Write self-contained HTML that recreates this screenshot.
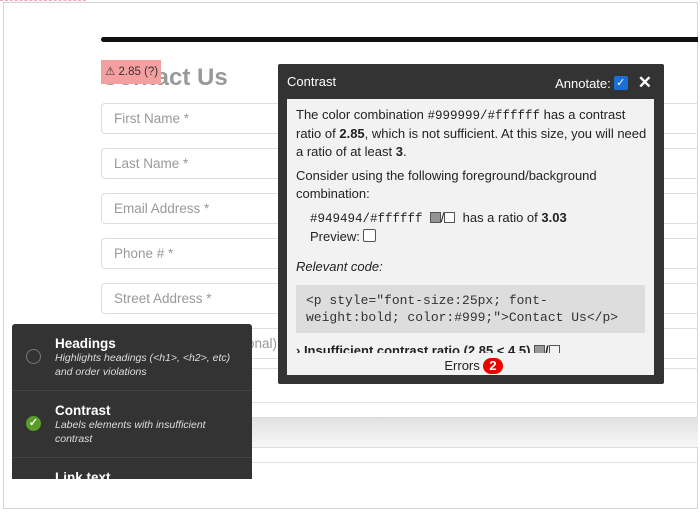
<!DOCTYPE html>
<html><head><meta charset="utf-8"><style>
*{box-sizing:border-box;margin:0;padding:0}
body{width:700px;height:517px;background:#fff;position:relative;overflow:hidden;font-family:"Liberation Sans",Arial,sans-serif}
.abs{position:absolute}
.frame{left:3px;top:2px;width:695px;height:507px;border:1px solid #d4d4d4}
.pink{left:0;top:0;width:86px;border-top:1px dashed #f4a6b8}
.bar{left:101px;top:37px;width:597px;height:5px;background:#111;border-radius:3px 0 0 3px}
.h{left:101px;top:64px;font-size:24px;font-weight:bold;color:#999}
.badge{left:101px;top:60px;width:60px;height:24px;background:#f5a0a0;color:#333;font-size:11.5px;line-height:24px;padding-left:4px}
.inp{left:101px;width:597px;height:31px;border:1px solid #ddd;border-right:none;border-radius:4px 0 0 4px;color:#999;font-size:13.5px;line-height:29px;padding-left:12px}
.ln{left:101px;width:597px;border-top:1px solid #e0e0e0}
.grad{left:101px;top:417px;width:597px;height:31px;background:linear-gradient(#e2e2e2,#f7f7f7);border-top:1px solid #ddd;border-bottom:1px solid #ddd}
.panel{left:278px;top:64px;width:386px;height:320px;background:#333;border-radius:2px}
.ph{left:9px;top:10px;color:#fff;font-size:13px}
.ann{right:12px;top:9px;color:#fff;font-size:13px;display:flex;align-items:center}
.cb{display:inline-block;width:14px;height:14px;background:#1a6fd6;border-radius:2px;color:#fff;font-size:11px;line-height:14px;text-align:center;margin-left:3px}
.x{font-size:17px;font-weight:bold;margin-left:10px}
.inner{left:9px;top:35px;width:367px;height:276px;background:#f2f2f2;overflow:hidden;font-size:13px;color:#222;line-height:18px;padding:7px 3px 7px 9px}
.mono{font-family:"Liberation Mono",monospace;font-size:12.5px}
.sw{display:inline-block;width:11px;height:11px;border:1px solid #555;vertical-align:-1px}
.code{background:#ddd;margin:9px 6px 0 0;padding:7px 10px;font-family:"Liberation Mono",monospace;font-size:13px;line-height:17px;color:#333}
.side{left:12px;top:324px;width:240px;height:155px;background:#333;border-radius:3px 3px 0 0;overflow:hidden;color:#fff}
.it{position:absolute;left:0;width:240px;border-bottom:1px solid #444}
.t{position:absolute;left:43px;font-weight:bold;font-size:13.5px}
.d{position:absolute;left:43px;font-style:italic;font-size:10.5px;line-height:14px;color:#ddd}
</style></head><body>
<div class="abs pink"></div>
<div class="abs frame"></div>
<div class="abs bar"></div>
<div class="abs h">Contact Us</div>
<div class="abs badge">⚠ 2.85 (?)</div>
<div class="abs inp" style="top:103px">First Name *</div>
<div class="abs inp" style="top:148px">Last Name *</div>
<div class="abs inp" style="top:193px">Email Address *</div>
<div class="abs inp" style="top:238px">Phone # *</div>
<div class="abs inp" style="top:283px">Street Address *</div>
<div class="abs inp" style="top:328px"><span style="position:absolute;right:421px">Street Address 2 (optional)</span></div>
<div class="abs ln" style="top:368px"></div>
<div class="abs ln" style="top:402px"></div>
<div class="abs grad"></div>
<div class="abs ln" style="top:462px"></div>

<div class="abs panel">
<div class="abs ph">Contrast</div>
<div class="abs ann">Annotate:<span class="cb">✓</span><span class="x">✕</span></div>
<div class="abs inner">
<p>The color combination <span class="mono">#999999/#ffffff</span> has a contrast ratio of <b>2.85</b>, which is not sufficient. At this size, you will need a ratio of at least <b>3</b>.</p>
<p style="margin-top:6px">Consider using the following foreground/background combination:</p>
<p style="margin-top:6px;padding-left:14px"><span class="mono">#949494/#ffffff</span> &nbsp;<span class="sw" style="background:#949494"></span>/<span class="sw" style="background:#fff"></span> &nbsp;has a ratio of <b>3.03</b><br>Preview: <span class="sw" style="background:#fff;width:13px;height:13px;border-radius:2px"></span></p>
<p style="margin-top:12px;font-style:italic">Relevant code:</p>
<div class="code">&lt;p style="font-size:25px; font-<br>weight:bold; color:#999;"&gt;Contact Us&lt;/p&gt;</div>
<p style="margin-top:10px;font-weight:bold;height:10px;overflow:hidden;line-height:16px">› Insufficient contrast ratio (2.85 &lt; 4.5) <span class="sw" style="background:#999"></span>/<span class="sw"></span></p>
<p style="text-align:center;margin-top:4px">Errors <span style="display:inline-block;background:#e00;color:#fff;border-radius:9px;padding:0 6px;font-weight:bold;line-height:16px">2</span></p>
</div>
</div>

<div class="abs side">
<div class="it" style="top:0;height:67px">
<div style="position:absolute;left:14px;top:25px;width:15px;height:15px;border:1.5px solid #777;border-radius:50%"></div>
<div class="t" style="top:12px">Headings</div>
<div class="d" style="top:27px;width:190px">Highlights headings (&lt;h1&gt;, &lt;h2&gt;, etc) and order violations</div>
</div>
<div class="it" style="top:67px;height:67px">
<div style="position:absolute;left:14px;top:25px;width:15px;height:15px;background:#5a9e2a;border-radius:50%;color:#fff;font-size:11px;font-weight:bold;text-align:center;line-height:15px">✓</div>
<div class="t" style="top:12px">Contrast</div>
<div class="d" style="top:27px;width:160px">Labels elements with insufficient contrast</div>
</div>
<div class="t" style="top:146px">Link text</div>
</div>
</body></html>
